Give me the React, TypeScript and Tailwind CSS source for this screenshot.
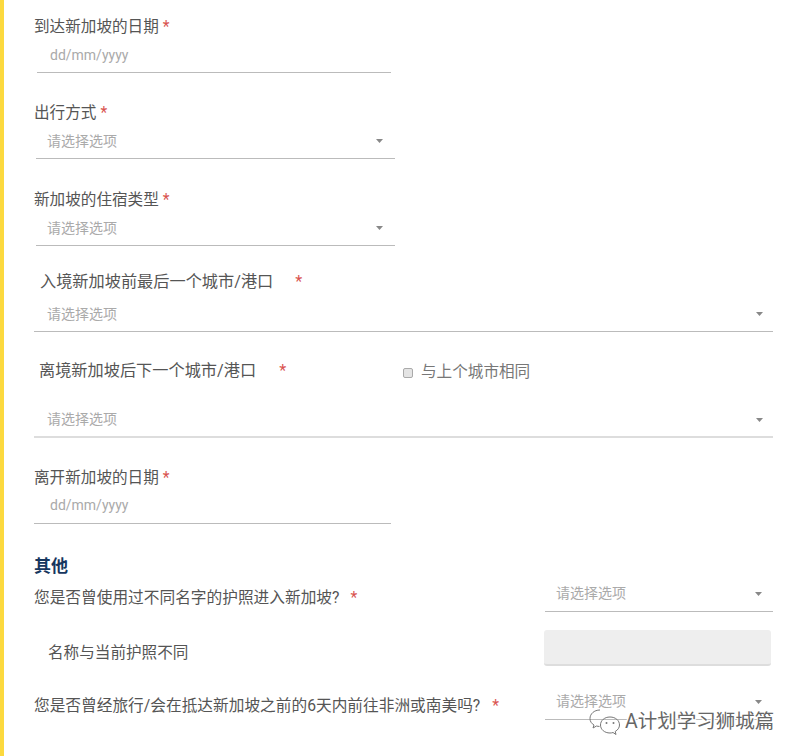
import React from "react";

const cjk = "font-['Roboto','Noto_Sans_CJK_SC',sans-serif]";

function Req({ className = "ml-1" }: { className?: string }) {
  return <span className={`text-[#d9534f] ${className}`}>*</span>;
}

function Label({ text, className = "", starClass }: { text: string; className?: string; starClass?: string }) {
  return (
    <div className={`flex h-5 items-center whitespace-nowrap leading-5 text-[#555] ${className}`}>
      <span>{text}</span>
      <Req className={starClass} />
    </div>
  );
}

function DateInput({ className = "" }: { className?: string }) {
  return (
    <div className={`flex items-center border-b border-[#bbb] text-[14px] text-[#aaa] ${className}`}>
      dd/mm/yyyy
    </div>
  );
}

function Select({ className = "", border = "border-b border-[#bbb]" }: { className?: string; border?: string }) {
  return (
    <div className={`flex items-center justify-between text-[14px] text-[#aaa] ${border} ${className}`}>
      <span>请选择选项</span>
      <svg width="7" height="4" viewBox="0 0 7 4" className="shrink-0">
        <path d="M0 0h7L3.500 4z" fill="#888" />
      </svg>
    </div>
  );
}

export default function App() {
  return (
    <div className={`relative flex h-[756px] w-[800px] overflow-hidden bg-white ${cjk}`}>
      <div className="w-[4px] shrink-0 bg-[#fcd93e]" />
      <div className="flex-1 pl-[30px] pt-[17px]">
        <Label text="到达新加坡的日期" className="text-[15.6px]" />
        <DateInput className="ml-[3px] h-[36px] w-[354px] pl-[13px] pt-[1px]" />

        <Label text="出行方式" className="mt-[30px] text-[15.6px]" />
        <Select className="ml-[2px] h-[36px] w-[359px] pl-[11px] pr-[12px] pt-[1px]" />

        <Label text="新加坡的住宿类型" className="mt-[31px] text-[15.6px]" />
        <Select className="ml-[2px] h-[36px] w-[359px] pl-[11px] pr-[12px] pt-[1px]" />

        <Label text="入境新加坡前最后一个城市/港口" className="ml-[6px] mt-[26px] text-[16.2px]" starClass="ml-[22px]" />
        <Select className="mt-[4px] h-[36px] w-[739px] pl-[13px] pr-[10px] pt-[1px]" />

        <div className="ml-[5px] mt-[29px] flex h-5 items-center">
          <Label text="离境新加坡后下一个城市/港口" className="w-[364px] text-[16.2px]" starClass="ml-[23px]" />
          <label className="mt-[3px] flex items-center gap-[8px] text-[15.6px] text-[#777]">
            <span className="h-[10px] w-[10px] rounded-[2px] border border-[#aaa] bg-[#e4e4e4]" />
            与上个城市相同
          </label>
        </div>
        <Select className="mt-[21px] h-[36px] w-[739px] pl-[13px] pr-[10px] pt-[1px]" border="border-b-2 border-[#ddd]" />

        <Label text="离开新加坡的日期" className="mt-[30px] text-[15.6px]" />
        <DateInput className="h-[36px] w-[357px] pl-[16px]" />

        <div className="mt-[31px] h-[22px] text-[17px] font-bold leading-[22px] text-[#16365f]">其他</div>

        <div className="mt-[1px] flex h-[32px] w-[739px] items-start justify-between">
          <Label text="您是否曾使用过不同名字的护照进入新加坡?" className="mt-[10px] text-[15.7px]" starClass="ml-[11px]" />
          <Select className="-mt-[2px] h-[36px] w-[228px] pl-[11px] pr-[11px]" />
        </div>

        <div className="mt-[20px] flex h-[36px] w-[737px] items-center justify-between">
          <span className="ml-[14px] mt-[12px] text-[15.6px] text-[#555]">名称与当前护照不同</span>
          <div className="h-[36px] w-[227px] rounded-[3px] border-b-2 border-[#ddd] bg-[#eeeeee]" />
        </div>

        <div className="mt-[18px] flex h-[36px] w-[739px] items-start justify-between">
          <Label text="您是否曾经旅行/会在抵达新加坡之前的6天内前往非洲或南美吗?" className="mt-[12px] text-[15.7px]" starClass="ml-[12px]" />
          <Select className="h-[36px] w-[228px] pl-[11px] pr-[11px]" />
        </div>
      </div>

      {/* watermark over the last select */}
      <div className="absolute left-[588px] top-[708px] flex items-center gap-[3px] pr-[2px]">
        <svg width="34" height="28" viewBox="0 0 34 28" fill="none" stroke="#777" strokeWidth="1">
          <path d="M12 2C6 2 2 6 2 10.500c0 3 1.500 5 4 6.500l-1 3 3.500-2c1 .3 2 .4 3 .4" />
          <path d="M22 9c-5.500 0-9.500 3.500-9.500 8s4 8 9.500 8c1.200 0 2.200-.2 3-.5l3 2-.8-3c2.600-1.500 4.300-3.800 4.300-6.500 0-4.500-4-8-9.500-8z" />
          <circle cx="18.500" cy="15" r="1" fill="#777" stroke="none" />
          <circle cx="25.500" cy="15" r="1" fill="#777" stroke="none" />
        </svg>
        <span className="whitespace-nowrap text-[19.500px] leading-6 text-[#666] [text-shadow:1px_1px_0_#fff,-1px_-1px_0_#fff,1px_-1px_0_#fff,-1px_1px_0_#fff]">
          A计划学习狮城篇
        </span>
      </div>
    </div>
  );
}
